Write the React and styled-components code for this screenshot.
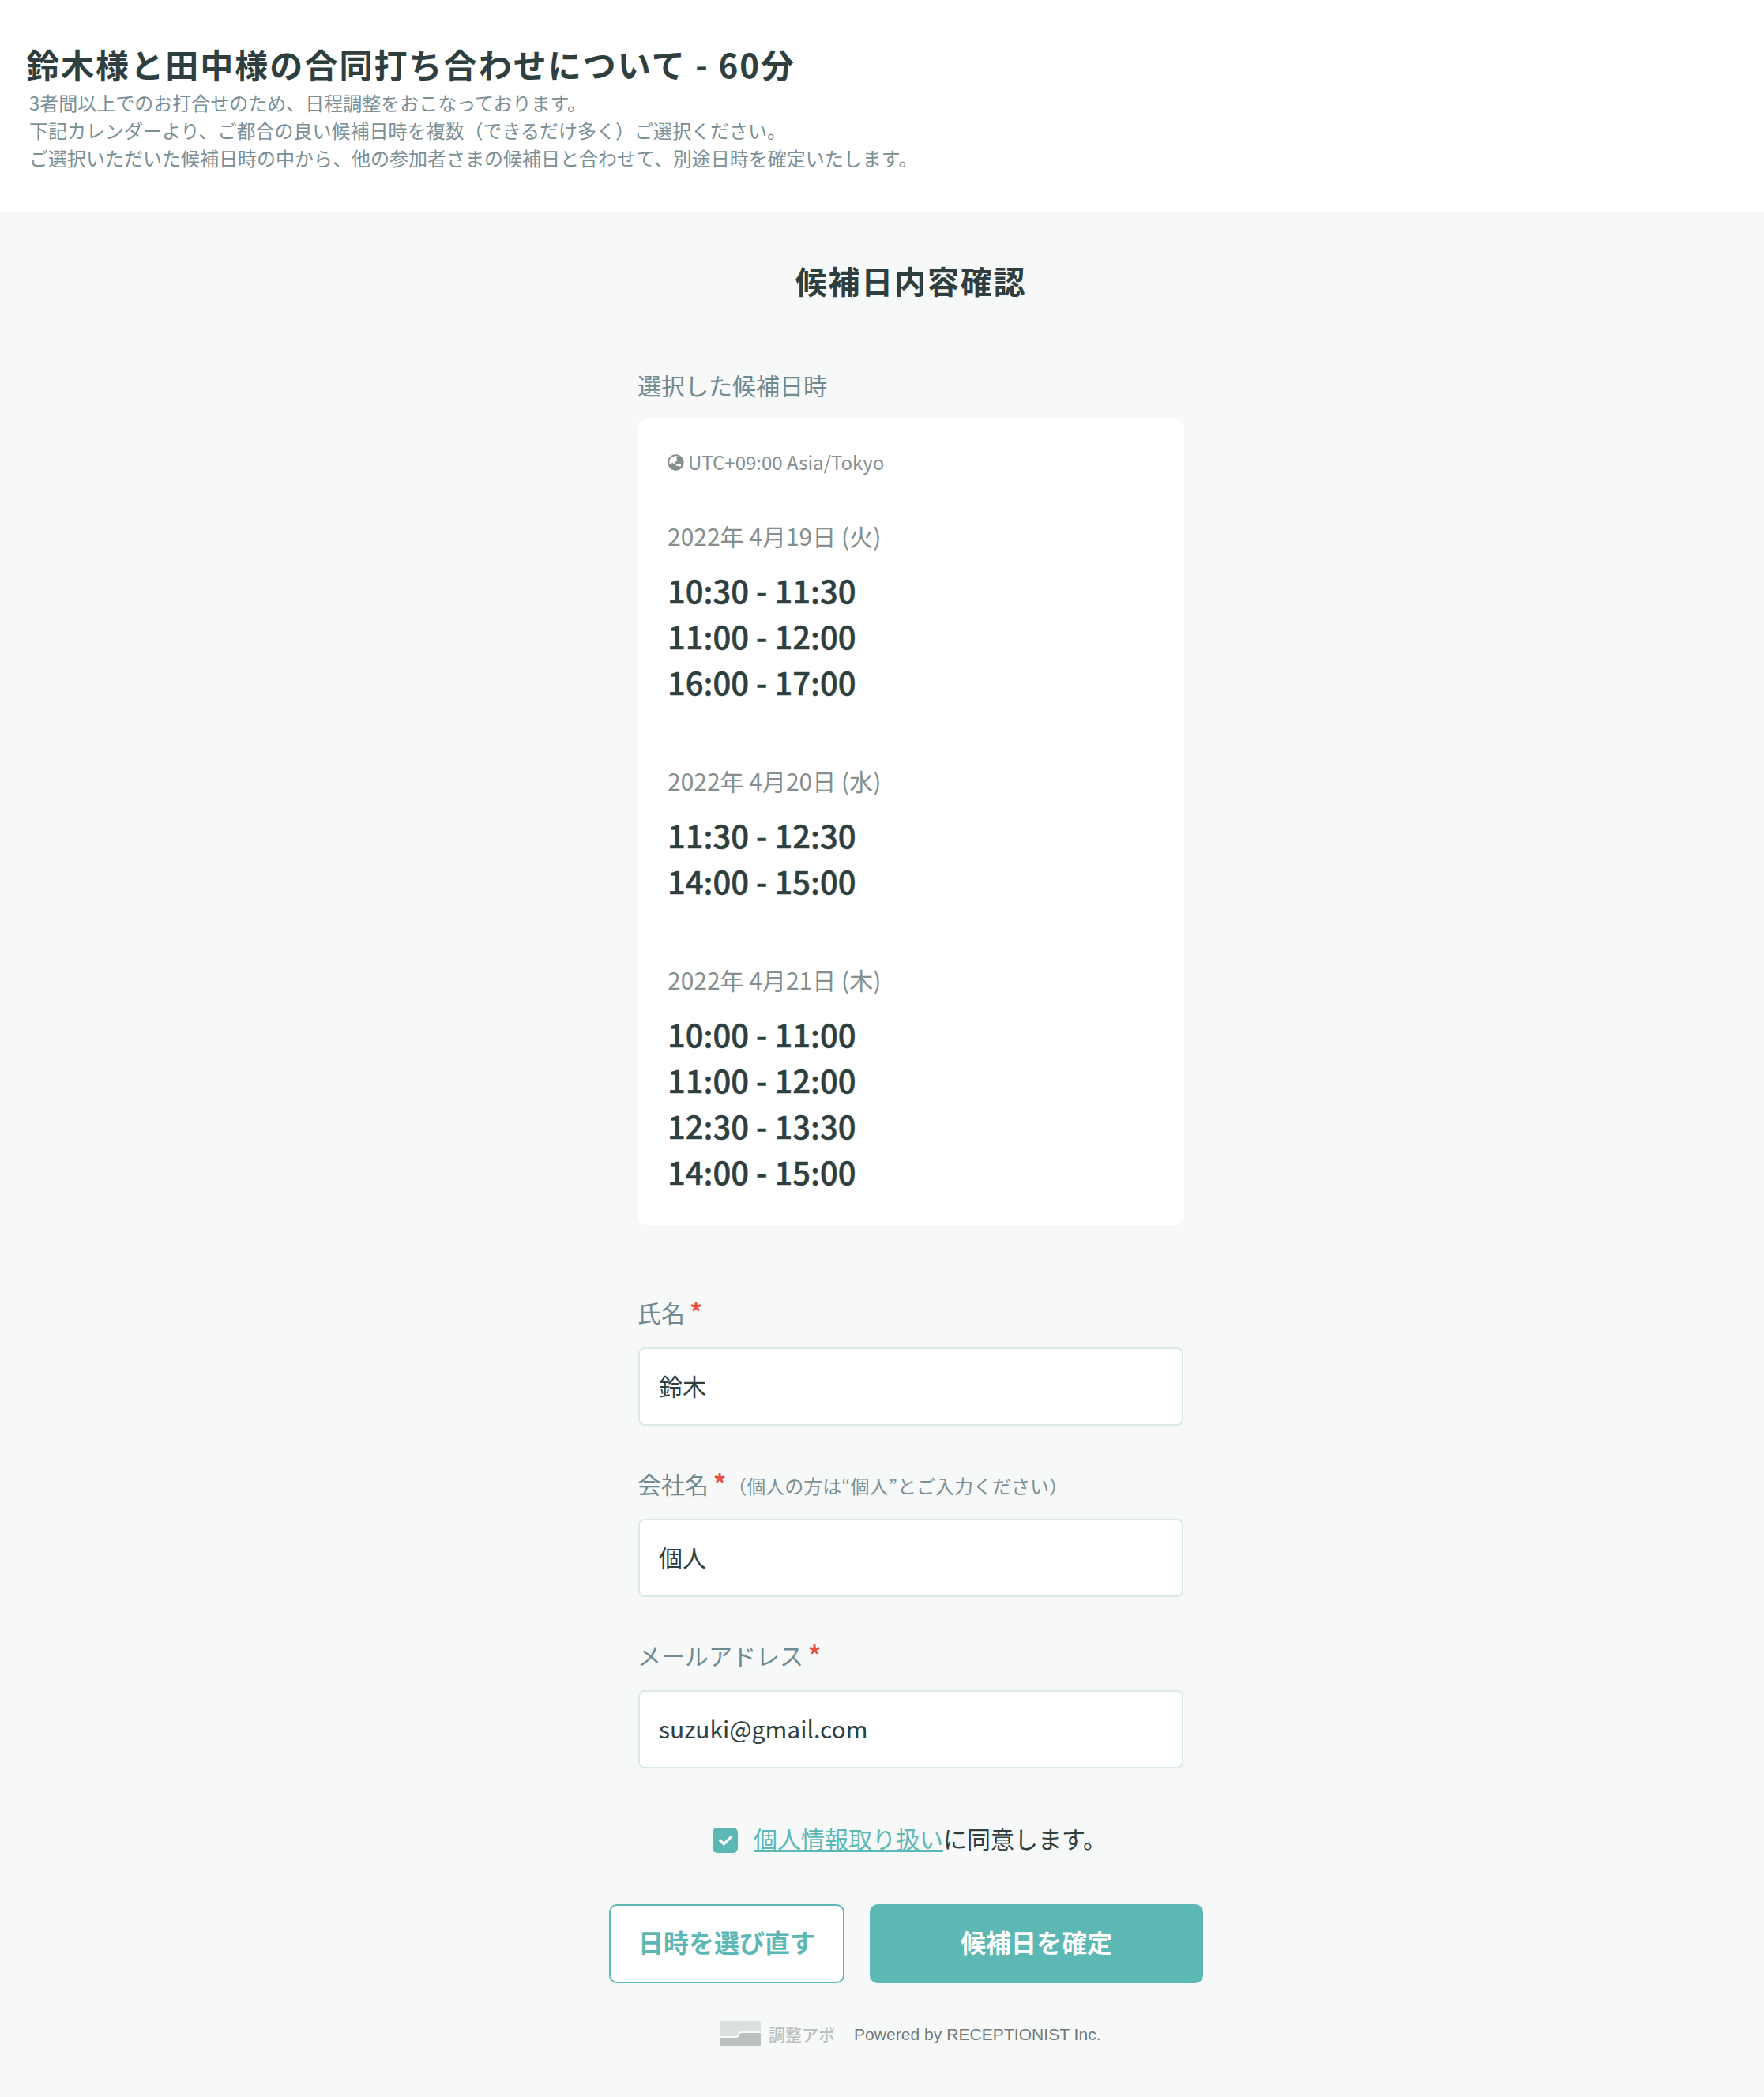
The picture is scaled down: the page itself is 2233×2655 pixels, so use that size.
import React from 'react'
import styled, { createGlobalStyle } from 'styled-components'
import { FaGlobeAsia, FaCheck } from 'react-icons/fa'

const GlobalStyle = createGlobalStyle`
  html, body {
    margin: 0;
    padding: 0;
    background: #f7f9f9;
    font-family: "Noto Sans CJK JP", "Noto Sans", sans-serif;
    color: #2f3f40;
  }
`

const Header = styled.header`
  background: #fff;
  padding: 51px 33px 51px;
`

const Title = styled.h1`
  margin: 0;
  font-size: 42px;
  line-height: 60px;
  font-weight: 700;
  letter-spacing: 2.05px;
  color: #2f3f40;
`

const Description = styled.p`
  margin: 1px 0 0 4px;
  font-size: 24px;
  line-height: 35px;
  color: #7b9095;
`

const Main = styled.main`
  padding: 59px 0 64px 807px;
`

const Column = styled.div`
  width: 692px;
`

const Heading = styled.h2`
  margin: 0;
  height: 60px;
  font-size: 40px;
  line-height: 56px;
  font-weight: 700;
  letter-spacing: 1.8px;
  text-align: center;
  color: #2f3f40;
`

const FieldLabel = styled.div`
  height: 44px;
  font-size: 30px;
  line-height: 40px;
  color: #6f8a90;
  display: flex;
  align-items: baseline;
`

const SelectedLabel = styled(FieldLabel)`
  margin-top: 80px;
`

const Card = styled.section`
  margin-top: 20px;
  background: #fff;
  border-radius: 12px;
  padding: 38px 38px 37px;
`

const Timezone = styled.div`
  display: flex;
  align-items: center;
  gap: 5px;
  height: 32px;
  font-size: 24px;
  line-height: 32px;
  color: #858f8f;
`

const DateGroup = styled.div`
  margin-top: ${({ $first }) => ($first ? '57px' : '74px')};
`

const DateLabel = styled.div`
  height: 44px;
  font-size: 30px;
  line-height: 40px;
  color: #858f8f;
`

const TimeList = styled.div`
  padding: 16px 0 2px;
`

const TimeRow = styled.div`
  font-size: 40px;
  line-height: 58px;
  font-weight: 500;
  -webkit-text-stroke: 0.5px #2f3f40;
  color: #2f3f40;
`

const Field = styled.div`
  margin-top: ${({ $first }) => ($first ? '89px' : '52px')};
`

const Required = styled.span`
  color: #e8503f;
  font-size: 32px;
  font-weight: 700;
  margin-left: 6px;
`

const Note = styled.span`
  font-size: 24px;
  margin-left: 2px;
  color: #7b9095;
`

const Input = styled.input`
  display: block;
  box-sizing: border-box;
  width: 690px;
  height: 99px;
  margin: 22px 0 0 1px;
  padding: 0 24px 4px;
  background: #fff;
  border: 2px solid #dce9e9;
  border-radius: 8px;
  outline: none;
  font-family: inherit;
  font-size: 30px;
  color: #2f3f40;
`

const AgreeRow = styled.label`
  margin-top: 75px;
  padding-right: 3px;
  display: flex;
  align-items: center;
  justify-content: center;
  height: 32px;
  font-size: 30px;
  color: #2f3f40;
`

const CheckBox = styled.span`
  width: 32px;
  height: 32px;
  margin-right: 20px;
  border-radius: 6px;
  background: #5cb8b4;
  color: #fff;
  display: flex;
  align-items: center;
  justify-content: center;
  font-size: 17px;
`

const AgreeText = styled.span`
  position: relative;
  top: -3px;
`

const PolicyLink = styled.a`
  color: #5cb8b4;
  text-decoration: underline;
`

const Buttons = styled.div`
  margin: 65px 0 0 -36px;
  display: flex;
  gap: 32px;
`

const Button = styled.button`
  box-sizing: border-box;
  flex: none;
  width: ${({ $wide }) => ($wide ? '422px' : '298px')};
  height: 100px;
  padding: 0 0 6px;
  border: 2px solid #5cb8b4;
  border-radius: 10px;
  background: ${({ $wide }) => ($wide ? '#5cb8b4' : '#fff')};
  color: ${({ $wide }) => ($wide ? '#fff' : '#5cb8b4')};
  font-family: inherit;
  font-size: 32px;
  font-weight: 700;
  cursor: pointer;
`

const Footer = styled.footer`
  margin: 48px 0 0 104px;
  display: flex;
  align-items: center;
  height: 32px;
`

const LogoText = styled.span`
  margin-left: 10px;
  font-size: 21px;
  font-weight: 500;
  color: #bcc0c0;
`

const Powered = styled.span`
  margin: 2px 0 0 24px;
  font-family: "Liberation Sans", Arial, sans-serif;
  font-size: 21px;
  letter-spacing: 0.05px;
  color: #6f7a7a;
`

const schedule = [
  { date: '2022年 4月19日 (火)', times: ['10:30 - 11:30', '11:00 - 12:00', '16:00 - 17:00'] },
  { date: '2022年 4月20日 (水)', times: ['11:30 - 12:30', '14:00 - 15:00'] },
  { date: '2022年 4月21日 (木)', times: ['10:00 - 11:00', '11:00 - 12:00', '12:30 - 13:30', '14:00 - 15:00'] },
]

const LogoMark = () => (
  <svg width="52" height="32" viewBox="0 0 52 32">
    <path d="M2 0h48a2 2 0 0 1 2 2v11H26c-2 0-3 1-3 3s-1 3-3 3H0V2a2 2 0 0 1 2-2z" fill="#dcdfdf" />
    <path d="M52 15v15a2 2 0 0 1-2 2H2a2 2 0 0 1-2-2V21h20c3 0 5-1 5-3s1-3 3-3z" fill="#bdc0c0" />
  </svg>
)

const App = () => (
  <>
    <GlobalStyle />
    <Header>
      <Title>鈴木様と田中様の合同打ち合わせについて - 60分</Title>
      <Description>
        3者間以上でのお打合せのため、日程調整をおこなっております。<br />
        下記カレンダーより、ご都合の良い候補日時を複数（できるだけ多く）ご選択ください。<br />
        ご選択いただいた候補日時の中から、他の参加者さまの候補日と合わせて、別途日時を確定いたします。
      </Description>
    </Header>
    <Main>
      <Column>
        <Heading>候補日内容確認</Heading>
        <SelectedLabel>選択した候補日時</SelectedLabel>
        <Card>
          <Timezone><FaGlobeAsia size={21} />UTC+09:00 Asia/Tokyo</Timezone>
          {schedule.map((day, i) => (
            <DateGroup key={day.date} $first={i === 0}>
              <DateLabel>{day.date}</DateLabel>
              <TimeList>
                {day.times.map((time) => <TimeRow key={time}>{time}</TimeRow>)}
              </TimeList>
            </DateGroup>
          ))}
        </Card>
        <Field $first>
          <FieldLabel>氏名<Required>*</Required></FieldLabel>
          <Input readOnly value="鈴木" />
        </Field>
        <Field>
          <FieldLabel>会社名<Required>*</Required><Note>（個人の方は“個人”とご入力ください）</Note></FieldLabel>
          <Input readOnly value="個人" />
        </Field>
        <Field>
          <FieldLabel>メールアドレス<Required>*</Required></FieldLabel>
          <Input readOnly value="suzuki@gmail.com" />
        </Field>
        <AgreeRow>
          <CheckBox><FaCheck /></CheckBox>
          <AgreeText><PolicyLink href="#">個人情報取り扱い</PolicyLink>に同意します。</AgreeText>
        </AgreeRow>
        <Buttons>
          <Button type="button">日時を選び直す</Button>
          <Button type="button" $wide>候補日を確定</Button>
        </Buttons>
        <Footer>
          <LogoMark />
          <LogoText>調整アポ</LogoText>
          <Powered>Powered by RECEPTIONIST Inc.</Powered>
        </Footer>
      </Column>
    </Main>
  </>
)

export default App
